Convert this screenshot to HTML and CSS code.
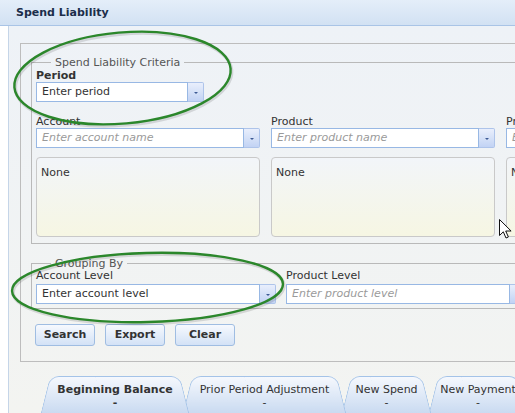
FILE: index.html
```html
<!DOCTYPE html>
<html>
<head>
<meta charset="utf-8">
<link rel="stylesheet" href="styles.css">
</head>
<body>
<div class="header">Spend Liability</div>
<div class="main">
  <div class="outer">
    <fieldset class="fs fs-criteria">
      <legend>Spend Liability Criteria</legend>
      <div class="label bold">Period</div>
      <div class="combo combo-period"><div class="field">Enter period</div><div class="trigger"></div></div>
      <div class="cols">
        <div class="col">
          <div class="label">Account</div>
          <div class="combo"><div class="field ph">Enter account name</div><div class="trigger"></div></div>
          <div class="list">None</div>
        </div>
        <div class="col">
          <div class="label">Product</div>
          <div class="combo"><div class="field ph">Enter product name</div><div class="trigger"></div></div>
          <div class="list">None</div>
        </div>
        <div class="col">
          <div class="label">Program</div>
          <div class="combo"><div class="field ph">Enter program name</div><div class="trigger"></div></div>
          <div class="list">None</div>
        </div>
      </div>
    </fieldset>
    <fieldset class="fs fs-group">
      <legend>Grouping By</legend>
      <div class="gcols">
        <div class="gcol">
          <div class="label glabel">Account Level</div>
          <div class="combo"><div class="field">Enter account level</div><div class="trigger"></div></div>
        </div>
        <div class="gcol">
          <div class="label glabel">Product Level</div>
          <div class="combo"><div class="field ph">Enter product level</div><div class="trigger"></div></div>
        </div>
      </div>
    </fieldset>
    <div class="buttons">
      <div class="btn">Search</div>
      <div class="btn">Export</div>
      <div class="btn">Clear</div>
    </div>
  </div>
  <div class="tabs">
    <div class="tab tab1 active">Beginning Balance<br>-</div>
    <div class="tab tab2">Prior Period Adjustment<br>-</div>
    <div class="tab tab3">New Spend<br>-</div>
    <div class="tab tab4">New Payment<br>-</div>
  </div>
</div>
<svg class="annot" width="515" height="413" viewBox="0 0 515 413">
  <ellipse cx="123.5" cy="79.5" rx="108.5" ry="45.5" transform="rotate(-5 123.5 79.5)" fill="none" stroke="rgba(0,0,0,0.12)" stroke-width="3.5"/>
  <ellipse cx="122.5" cy="78" rx="108.5" ry="45.5" transform="rotate(-5 122.5 78)" fill="none" stroke="#2b872b" stroke-width="2.4"/>
  <ellipse cx="148.5" cy="289" rx="135.5" ry="34.5" transform="rotate(-1.5 148.5 289)" fill="none" stroke="rgba(0,0,0,0.12)" stroke-width="3.5"/>
  <ellipse cx="147.5" cy="287.5" rx="135.5" ry="34.5" transform="rotate(-1.5 147.5 287.5)" fill="none" stroke="#2b872b" stroke-width="2.4"/>
  <path d="M499.5 219.5 v16 l3.8 -3.7 l2.7 6.2 l2.4 -1 l-2.7 -6 h5.4 z" fill="#fff" stroke="#111" stroke-width="1" stroke-linejoin="round"/>
</svg>
</body>
</html>
```
FILE: styles.css
```css
html, body {
  margin: 0;
  padding: 0;
}
body {
  width: 515px;
  height: 413px;
  overflow: hidden;
  position: relative;
  background: #fff;
  font-family: "DejaVu Sans", Verdana, sans-serif;
  font-size: 11px;
  color: #333;
}
.header {
  height: 25px;
  line-height: 25px;
  padding-left: 16px;
  border-bottom: 1px solid #a9c4e6;
  background: linear-gradient(#e4eef9, #d2e1f3);
  font-weight: bold;
  color: #1b2d4a;
}
.main {
  margin-left: 8px;
  border-left: 1px solid #c5d5e8;
  background: linear-gradient(#eef2f7, #f3f4f1);
  padding: 17px 0 0 11px;
  height: 387px;
  box-sizing: border-box;
}
.outer {
  width: 780px;
  border: 1px solid #bdbdbd;
  padding: 12px 0 15px 10px;
}
.fs {
  margin: 0;
  border: 1px solid #b9b9b9;
  padding: 0 4px 6px 4px;
  min-width: 0;
}
.fs legend {
  padding: 0 4px;
  margin-left: 15px;
  line-height: 13px;
  color: #555;
}
.fs-group {
  margin-top: 13px;
  padding-bottom: 4px;
}
.label {
  line-height: 13px;
  color: #333;
}
.bold {
  font-weight: bold;
}
.glabel {
  margin-top: -1px;
  margin-bottom: 2px;
}
.combo {
  display: flex;
  height: 20px;
}
.combo-period {
  width: 168px;
}
.field {
  flex: 1;
  border: 1px solid #98b8e4;
  background: #fff;
  line-height: 18px;
  padding-left: 5px;
  white-space: nowrap;
  overflow: hidden;
  color: #333;
}
.field.ph {
  font-style: italic;
  color: #9a9a9a;
}
.trigger {
  width: 15px;
  flex: none;
  border: 1px solid #aec4ea;
  border-left: none;
  border-radius: 0 2px 2px 0;
  background: linear-gradient(#e9effc, #c2d3f4);
  display: flex;
  align-items: center;
  justify-content: center;
}
.trigger::after {
  content: "";
  width: 0;
  height: 0;
  border-left: 2px solid transparent;
  border-right: 2px solid transparent;
  border-top: 2px solid #3d5a94;
  margin-top: 1px;
}
.cols {
  display: flex;
  gap: 11px;
  margin-top: 13px;
}
.col {
  width: 224px;
  flex: none;
}
.list {
  margin-top: 9px;
  height: 80px;
  box-sizing: border-box;
  border: 1px solid #c9c9c9;
  border-radius: 4px;
  background: linear-gradient(#f2f5f9, #f6f6e3);
  padding: 8px 4px;
  line-height: 13px;
}
.gcols {
  display: flex;
  gap: 10px;
}
.gcol {
  width: 240px;
  flex: none;
}
.buttons {
  display: flex;
  gap: 10px;
  margin-top: 15px;
  margin-left: 4px;
}
.btn {
  width: 60px;
  height: 22px;
  box-sizing: border-box;
  border: 1px solid #9fbde2;
  border-radius: 3px;
  background: linear-gradient(#f6f9fe, #d3e2f6);
  text-align: center;
  line-height: 20px;
  font-weight: bold;
  color: #333;
}
.tabs {
  display: flex;
  margin-top: 14px;
  margin-left: 20px;
}
.tab {
  position: relative;
  height: 40px;
  box-sizing: border-box;
  padding-top: 7px;
  line-height: 13px;
  text-align: center;
  white-space: nowrap;
  color: #333;
  flex: none;
}
.tab::before,
.tab::after {
  content: "";
  position: absolute;
  top: 0;
  bottom: 0;
  width: 56%;
  background: linear-gradient(#f5f8fd, #c6d8f0);
  border-top: 1px solid #a4c3e8;
  z-index: -1;
}
.tab::before {
  left: 0;
  border-left: 1px solid #a4c3e8;
  border-top-left-radius: 9px;
  transform-origin: bottom left;
  transform: skewX(-14deg);
}
.tab::after {
  right: 0;
  border-right: 1px solid #a4c3e8;
  border-top-right-radius: 9px;
  transform-origin: bottom right;
  transform: skewX(14deg);
}
.tab.active {
  font-weight: bold;
}
.tab1 {
  width: 150px;
  z-index: 4;
}
.tab2 {
  width: 165px;
  margin-left: -8px;
  z-index: 3;
}
.tab3 {
  width: 91px;
  margin-left: -6px;
  z-index: 2;
}
.tab4 {
  width: 100px;
  margin-left: -4px;
  z-index: 1;
}
.annot {
  position: absolute;
  left: 0;
  top: 0;
  pointer-events: none;
}
```
